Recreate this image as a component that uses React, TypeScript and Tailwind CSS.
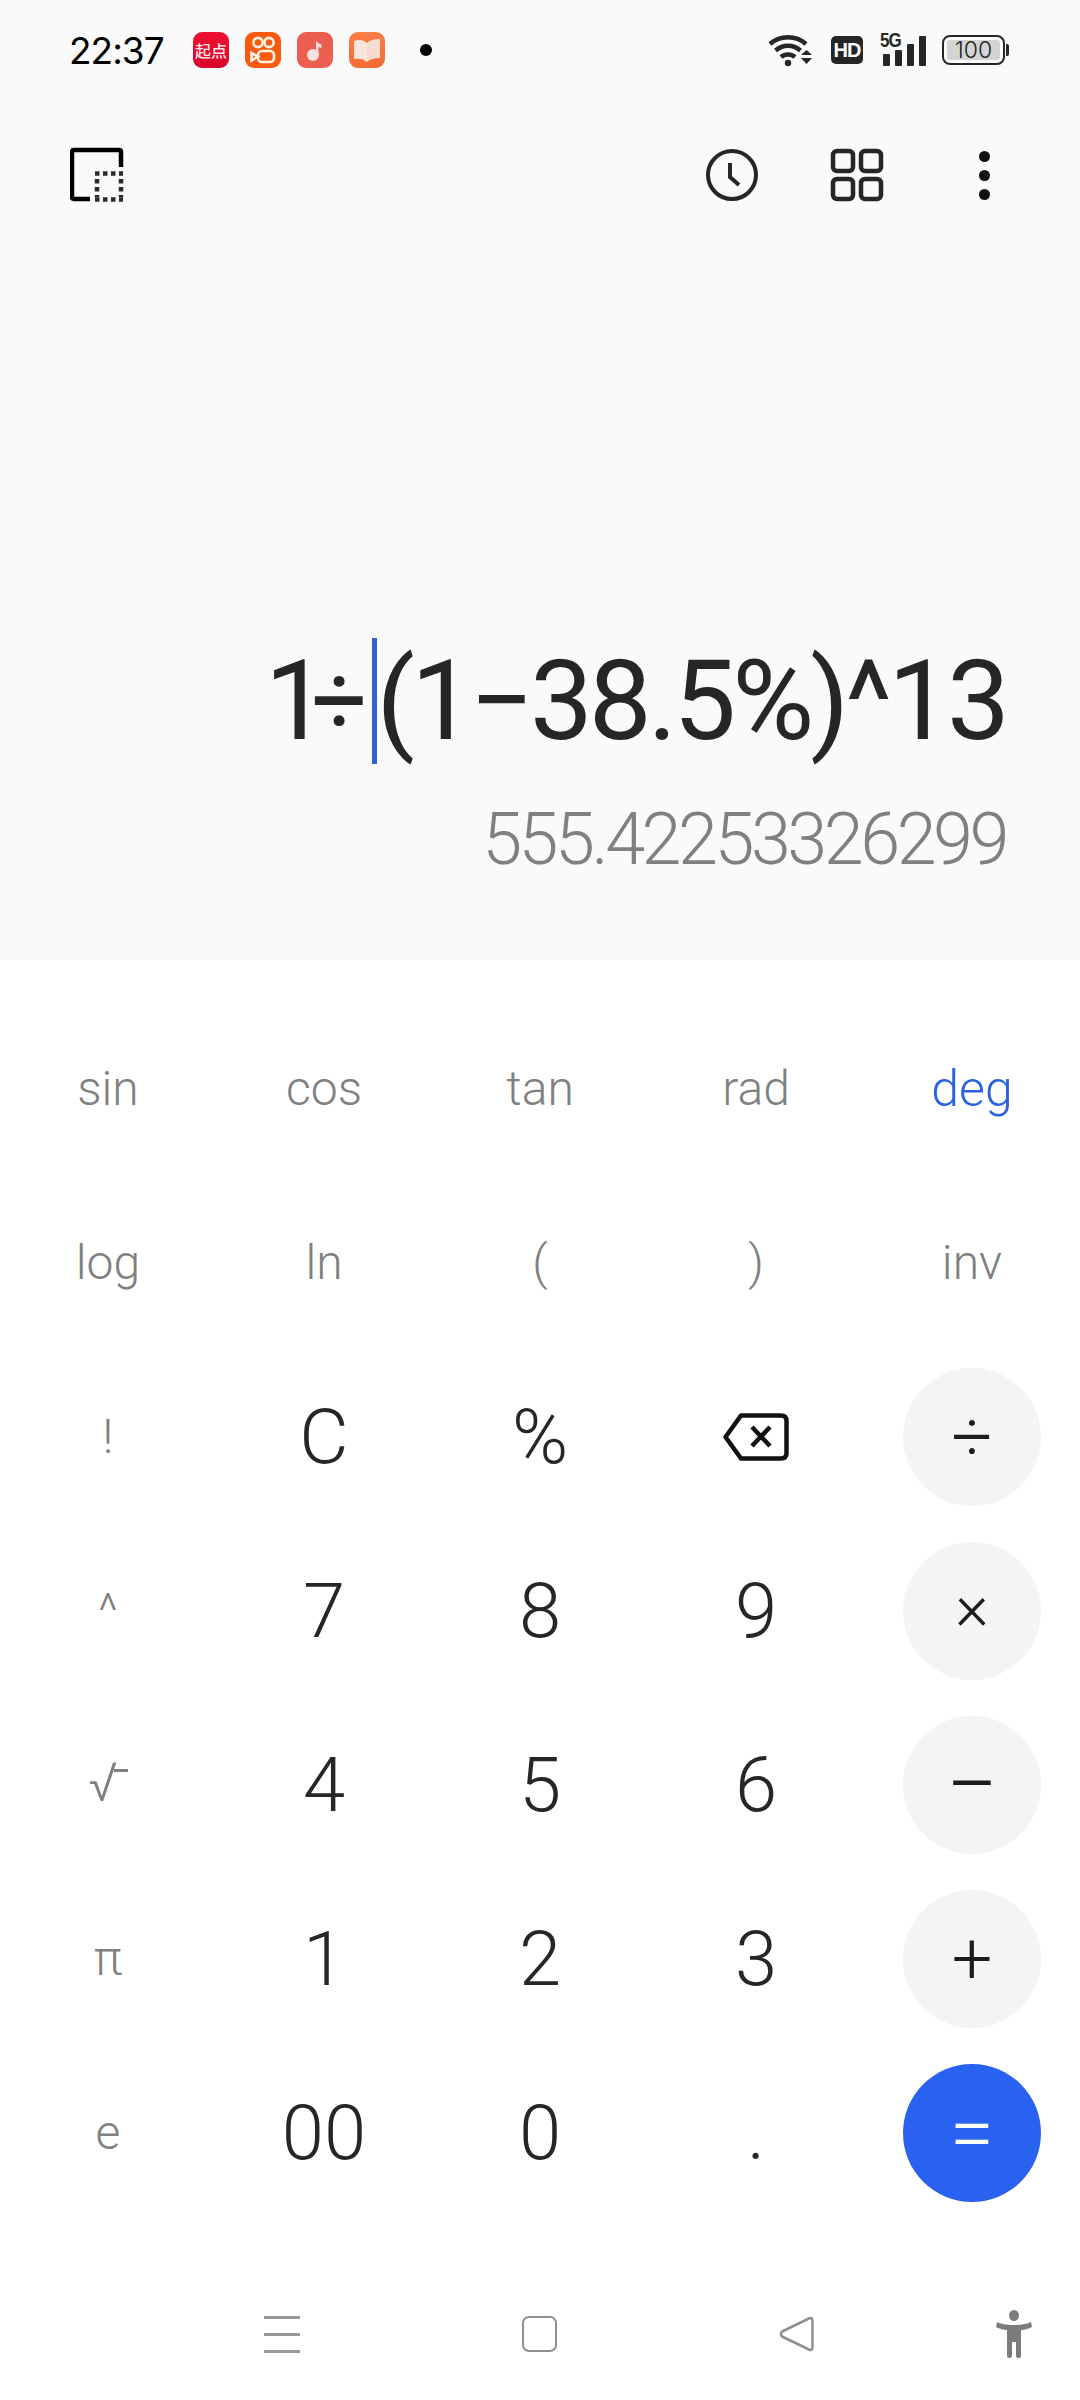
import React from "react";

const FONT = "font-['Roboto','Noto_Sans_CJK_SC',sans-serif]";

function Wifi() {
  return (
    <svg width="46" height="34" viewBox="0 0 46 34" fill="none">
      <path d="M2 11 C12 2 28 2 38 11" stroke="#262626" strokeWidth="4.5" />
      <path d="M7.5 17.5 C15 11 25 11 32.5 17.5" stroke="#262626" strokeWidth="4.5" />
      <path d="M13 24 C17 20.5 23 20.5 27 24" stroke="#262626" strokeWidth="4.5" />
      <circle cx="20" cy="30" r="3.2" fill="#262626" />
      <path d="M33 22 L38.5 17 L44 22 Z M33 25 L44 25 L38.5 31 Z" fill="#262626" />
    </svg>
  );
}

function Signal() {
  return (
    <div className="relative w-[46px] h-[32px] flex items-end gap-[5px] pl-[3px]">
      <span className="absolute left-0 top-[-4px] text-[20px] leading-[20px] font-bold text-[#262626] font-['Liberation_Sans',sans-serif] tracking-[-1px] scale-x-[0.85] origin-left">5G</span>
      <div className="w-[7px] h-[12px] bg-[#262626] rounded-[1px]" />
      <div className="w-[7px] h-[16px] bg-[#262626] rounded-[1px]" />
      <div className="w-[7px] h-[22px] bg-[#262626] rounded-[1px]" />
      <div className="w-[7px] h-[30px] bg-[#262626] rounded-[1px]" />
    </div>
  );
}

function Battery() {
  return (
    <div className="flex items-center gap-[1px]">
      <div className="w-[63px] h-[30px] rounded-[8px] border-[2px] border-[#262626] p-[3px]">
        <div className="w-full h-full rounded-[3px] bg-[#d4d4d4] flex items-center justify-center text-[23px] leading-none text-[#262626] font-['Inter',sans-serif] font-light">100</div>
      </div>
      <div className="w-[3px] h-[12px] bg-[#262626] rounded-r-[2px]" />
    </div>
  );
}

function AppIcons() {
  return (
    <div className="flex items-center gap-[16px] ml-[30px]">
      <div className="w-[36px] h-[36px] rounded-[9px] bg-gradient-to-b from-[#ef1030] to-[#d8062a] flex items-center justify-center text-[16px] leading-none font-medium text-[#fbe6e8] whitespace-nowrap font-['Noto_Sans_CJK_SC',sans-serif]">起点</div>
      <div className="w-[36px] h-[36px] rounded-[9px] bg-[#fa5a10] flex items-center justify-center">
        <svg width="28" height="30" viewBox="0 0 28 30" fill="none" stroke="#fff3e6" strokeWidth="2.6">
          <circle cx="9" cy="7.5" r="4.6" />
          <circle cx="20" cy="7.5" r="4.6" />
          <rect x="9" y="16" width="16" height="11" rx="4" />
          <path d="M9 21.5 L2.5 18 L2.5 25.5 Z" />
        </svg>
      </div>
      <div className="w-[36px] h-[36px] rounded-[9px] bg-[#ec5f50] flex items-center justify-center">
        <svg width="24" height="28" viewBox="0 0 24 28">
          <circle cx="10" cy="19" r="6" fill="#fbe2dc" />
          <path d="M13 19 L13 4 C13.5 7 17 8 18.5 8.5 L18.5 12 C17 12 16 11.3 15.5 10.8 L15.5 19 Z" fill="#fbe2dc" />
        </svg>
      </div>
      <div className="w-[36px] h-[36px] rounded-[9px] bg-gradient-to-b from-[#fb7f45] to-[#f26a35] flex items-center justify-center">
        <svg width="30" height="28" viewBox="0 0 30 28">
          <path d="M2 5 C7 3 12 4 15 7 L15 26 C12 23 7 22 2 23 Z" fill="#fbe5da" />
          <path d="M28 3 C22 3 18 4 15 7 L15 26 C18 23 23 22 28 22 Z" fill="#f6dccf" />
        </svg>
      </div>
    </div>
  );
}

function StatusBar() {
  return (
    <div className="h-[100px] pl-[69px] pr-[71px] flex items-center text-black">
      <span className="text-[37px] leading-none w-[94px] font-['Inter',sans-serif] font-normal tracking-[-1px]">22:37</span>
      <AppIcons />
      <div className="w-[12px] h-[12px] rounded-full bg-black ml-[35px]" />
      <div className="ml-auto flex items-center">
        <Wifi />
        <div className="w-[32px] h-[28px] ml-[17px] rounded-[5px] bg-[#262626] text-white text-[20px] font-bold leading-none flex items-center justify-center font-['Liberation_Sans',sans-serif] tracking-[-1px]">HD</div>
        <div className="ml-[17px]"><Signal /></div>
        <div className="ml-[16px]"><Battery /></div>
      </div>
    </div>
  );
}

function Toolbar() {
  return (
    <div className="h-[56px] mt-[47px] pl-[70px] pr-[70px] flex items-center">
      <svg width="54" height="56" viewBox="0 0 54 56" fill="none">
        <path d="M20 52 L4 52 Q2 52 2 50 L2 5 Q2 3 4 3 L49 3 Q51 3 51 5 L51 20" stroke="#000" strokeWidth="4.5" />
        <path d="M25 26.5 H53 M25 52.5 H53" stroke="#2b2b2b" strokeWidth="4.5" strokeDasharray="4.5 3.5" />
        <path d="M27 32 V50 M51 32 V50" stroke="#2b2b2b" strokeWidth="4.5" strokeDasharray="4.5 3.5" />
      </svg>
      <div className="ml-auto flex items-center">
        <svg width="54" height="54" viewBox="0 0 54 54" fill="none" stroke="#262626" strokeWidth="4">
          <circle cx="27" cy="27" r="24" />
          <path d="M25 15 V29 L34 37" strokeWidth="4" />
        </svg>
        <svg className="ml-[71px]" width="54" height="54" viewBox="0 0 54 54" fill="none" stroke="#262626" strokeWidth="4.5">
          <rect x="3" y="3" width="20" height="20" rx="4" />
          <rect x="31" y="3" width="20" height="20" rx="4" />
          <rect x="3" y="31" width="20" height="20" rx="4" />
          <rect x="31" y="31" width="20" height="20" rx="4" />
        </svg>
        <div className="ml-[95px] mr-[20px] flex flex-col gap-[8px]">
          <div className="w-[11px] h-[11px] rounded-full bg-[#111]" />
          <div className="w-[11px] h-[11px] rounded-full bg-[#111]" />
          <div className="w-[11px] h-[11px] rounded-full bg-[#111]" />
        </div>
      </div>
    </div>
  );
}

function Display() {
  return (
    <div className="flex-1 flex flex-col items-end justify-end pr-[74px] pb-[81px]">
      <div className={`flex items-center h-[126px] text-[112px] leading-none font-normal text-[#262626] whitespace-nowrap tracking-[-4px] ${FONT}`}>
        <span className="tracking-[-16px]">1</span>
        <span className="mr-[8px] text-[98px]">÷</span>
        <span className="w-[5px] h-[126px] bg-[#2f62d8]" />
        <span>(1−38.5%)^13</span>
      </div>
      <div className={`mt-[37px] text-[72px] leading-[78px] font-light text-[#808080] whitespace-nowrap tracking-[-3.5px] ${FONT}`}>555.42253326299</div>
    </div>
  );
}

function Backspace() {
  return (
    <svg width="66" height="48" viewBox="0 0 66 48" fill="none" stroke="#111" strokeWidth="4.5" strokeLinejoin="round">
      <path d="M18 2.5 L58 2.5 Q63.5 2.5 63.5 8 L63.5 40 Q63.5 45.5 58 45.5 L18 45.5 L2.5 24 Z" />
      <path d="M29 14 L47 33 M47 14 L29 33" />
    </svg>
  );
}

const fn = "text-[#808080] text-[48px]";
const num = "text-[#262626] text-[76px]";

function Key({ cls, children }: { cls: string; children: React.ReactNode }) {
  return <div className={`flex items-center justify-center leading-none font-light ${cls}`}>{children}</div>;
}

function Op({ children, cls }: { children: React.ReactNode; cls: string }) {
  return (
    <div className="flex items-center justify-center">
      <div className={`w-[138px] h-[138px] rounded-full flex items-center justify-center leading-none ${cls}`}>
        {children}
      </div>
    </div>
  );
}

const opGray = "bg-[#f4f4f4] text-[#1c1c1c] font-light";

function Keypad() {
  return (
    <div className={`grid grid-cols-5 auto-rows-[174px] mt-[42px] ${FONT}`}>
      <Key cls={fn}>sin</Key>
      <Key cls={fn}>cos</Key>
      <Key cls={fn}>tan</Key>
      <Key cls={fn}>rad</Key>
      <Key cls="text-[#2962e0] text-[50px]">deg</Key>

      <Key cls={fn}>log</Key>
      <Key cls={fn}>ln</Key>
      <Key cls={fn}>(</Key>
      <Key cls={fn}>)</Key>
      <Key cls={fn}>inv</Key>

      <Key cls={fn}>!</Key>
      <Key cls={num}>C</Key>
      <Key cls={num}>%</Key>
      <div className="flex items-center justify-center"><Backspace /></div>
      <Op cls={`${opGray} text-[72px]`}>÷</Op>

      <Key cls={fn}>^</Key>
      <Key cls={num}>7</Key>
      <Key cls={num}>8</Key>
      <Key cls={num}>9</Key>
      <Op cls={`${opGray} text-[64px] pb-[6px]`}>×</Op>

      <Key cls="text-[#808080] text-[54px]">
        <span className="relative pr-[10px] pb-[4px]">
          √
          <span className="absolute right-0 top-[13px] w-[14px] h-[3px] bg-[#808080]" />
        </span>
      </Key>
      <Key cls={num}>4</Key>
      <Key cls={num}>5</Key>
      <Key cls={num}>6</Key>
      <Op cls={`${opGray} text-[92px]`}>−</Op>

      <Key cls={fn}>π</Key>
      <Key cls={num}>1</Key>
      <Key cls={num}>2</Key>
      <Key cls={num}>3</Key>
      <Op cls={`${opGray} text-[72px]`}>+</Op>

      <Key cls={fn}>e</Key>
      <Key cls={num}>00</Key>
      <Key cls={num}>0</Key>
      <Key cls={num}>.</Key>
      <Op cls="bg-[#2962f0] text-white text-[80px] font-light">=</Op>
    </div>
  );
}

function NavBar() {
  return (
    <div className="flex-1 flex items-center pl-[264px] pt-[48px]">
      <div className="w-[36px] h-[37px] flex flex-col justify-between">
        <div className="h-[3px] bg-[#999]" />
        <div className="h-[3px] bg-[#999]" />
        <div className="h-[3px] bg-[#999]" />
      </div>
      <div className="w-[35px] h-[36px] ml-[222px] rounded-[7px] border-[2.5px] border-[#8f8f8f]" />
      <svg className="ml-[222px]" width="35" height="36" viewBox="0 0 35 36" fill="none" stroke="#8f8f8f" strokeWidth="2.5" strokeLinejoin="round">
        <path d="M30 2.5 Q33.5 1 33.5 5 L33.5 31 Q33.5 35 30 33.5 L3 20.5 Q1 18 3 15.5 Z" />
      </svg>
      <svg className="ml-[182px]" width="36" height="48" viewBox="0 0 36 48" fill="#7c7c7c">
        <ellipse cx="18" cy="5.5" rx="5" ry="5.5" />
        <path d="M1 12 C5 14 10 15 18 15 C26 15 31 14 35 12 L36 17 C32 19 29 20 25 20 L25 46 Q25 48 23 48 Q20 48 20 46 L20 32 L16 32 L16 46 Q16 48 13.5 48 Q11 48 11 46 L11 20 C7 20 4 19 0 17 Z" />
      </svg>
    </div>
  );
}

export default function App() {
  return (
    <div className="w-[1080px] h-[2400px] bg-white flex flex-col overflow-hidden">
      <div className="h-[960px] bg-[#fafafa] flex flex-col">
        <StatusBar />
        <Toolbar />
        <Display />
      </div>
      <Keypad />
      <NavBar />
    </div>
  );
}
